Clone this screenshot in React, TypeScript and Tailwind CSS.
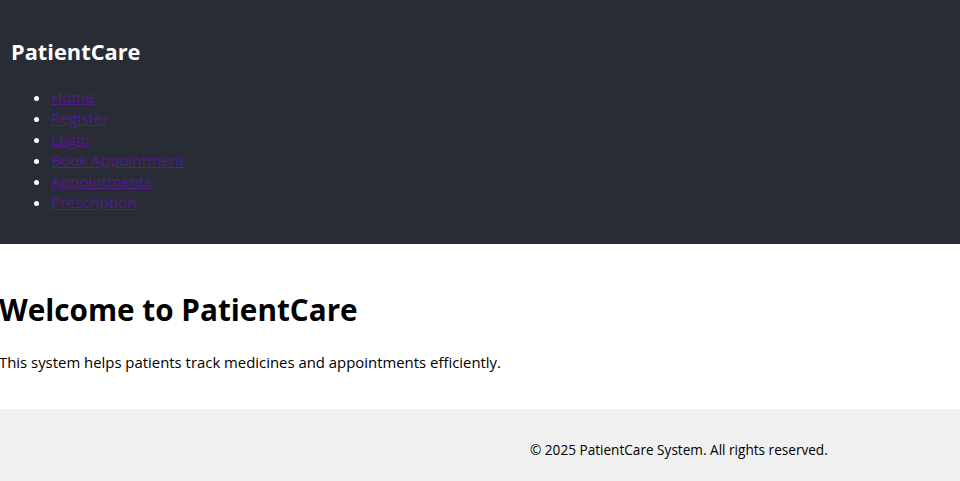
import React from "react";

const links = ["Home", "Register", "Login", "Book Appointment", "Appointments", "Prescription"];

export default function App() {
  return (
    <div className="w-[960px] min-h-[481px] bg-white text-black" style={{ fontFamily: '"Open Sans", "Noto Sans", sans-serif' }}>
      <header className="h-[244px] bg-[#282c34] px-[10px] pt-[36px] text-white">
        <h2 className="pl-[1px] text-[21.8px] leading-[32px] font-bold">PatientCare</h2>
        <ul className="mt-[19px] list-disc pl-[41px] text-[15.2px] leading-[21px]">
          {links.map((l) => (
            <li key={l}>
              <a href="#" className="text-[#551a8b] underline">{l}</a>
            </li>
          ))}
        </ul>
      </header>
      <main className="h-[165px] pt-[45px]">
        <h1 className="-ml-[1px] text-[29.7px] leading-[42px] font-bold">Welcome to PatientCare</h1>
        <p className="-ml-[1px] mt-[21px] text-[14.9px] leading-[21px]">This system helps patients track medicines and appointments efficiently.</p>
      </main>
      <footer className="h-[72px] bg-[#f0f0f0] pl-[530px] pt-[31px]">
        <p className="text-[13.6px] leading-[19px]">© 2025 PatientCare System. All rights reserved.</p>
      </footer>
    </div>
  );
}
